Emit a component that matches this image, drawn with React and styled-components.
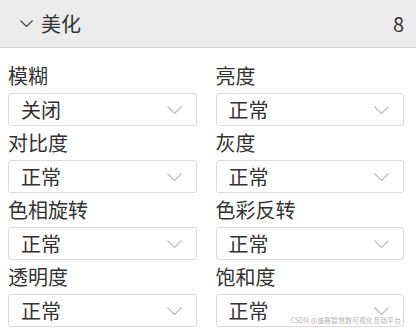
import React from "react";
import styled, { createGlobalStyle } from "styled-components";

const GlobalStyle = createGlobalStyle`
  html, body {
    margin: 0;
    padding: 0;
    background: #ffffff;
  }
  body {
    font-family: "Noto Sans CJK SC", "Noto Sans", sans-serif;
    color: #333333;
  }
`;

const Panel = styled.div`
  position: relative;
  width: 416px;
  height: 335px;
  overflow: hidden;
  background: #ffffff;
`;

const Header = styled.div`
  display: flex;
  align-items: center;
  height: 47px;
  padding: 0 12px 0 20px;
  background: #ececec;
  border-bottom: 1px solid #d9d9d9;
  box-sizing: border-box;
  height: 48px;
`;

const HeaderTitle = styled.div`
  display: flex;
  align-items: center;
  gap: 8px;
  flex: 1;
  font-size: 20px;
  line-height: 28px;
  color: #333333;
`;

const Count = styled.span`
  font-size: 20px;
  line-height: 28px;
  color: #333333;
`;

const Grid = styled.div`
  display: grid;
  grid-template-columns: 1fr 1fr;
  column-gap: 19px;
  padding: 11px 12px 0 8px;
`;

const Field = styled.div`
  display: flex;
  flex-direction: column;
`;

const Label = styled.div`
  font-size: 20px;
  line-height: 34px;
  height: 34px;
  color: #333333;
  white-space: nowrap;
`;

const Select = styled.div`
  display: flex;
  align-items: center;
  justify-content: space-between;
  height: 33px;
  box-sizing: border-box;
  padding: 0 14px 0 12px;
  border: 1px solid #dcdcdc;
  border-radius: 3px;
  font-size: 20px;
  color: #333333;
`;

const Watermark = styled.div`
  position: absolute;
  right: 15px;
  bottom: 11px;
  font-size: 7px;
  line-height: 8px;
  color: #b5b5b5;
  white-space: nowrap;
`;

const Chevron = ({ size = 15, color = "#bdbdbd", stroke = 1.2 }) => (
  <svg width={size} height={Math.round(size * 0.55)} viewBox="0 0 15 8" fill="none">
    <path d="M0.5 0.5 L7.5 7.5 L14.5 0.5" stroke={color} strokeWidth={stroke} />
  </svg>
);

const fields = [
  ["模糊", "关闭"],
  ["亮度", "正常"],
  ["对比度", "正常"],
  ["灰度", "正常"],
  ["色相旋转", "正常"],
  ["色彩反转", "正常"],
  ["透明度", "正常"],
  ["饱和度", "正常"],
];

export default function App() {
  return (
    <>
      <GlobalStyle />
      <Panel>
        <Header>
          <HeaderTitle>
            <Chevron size={13} color="#444" stroke={1.4} />
            <span>美化</span>
          </HeaderTitle>
          <Count>8</Count>
        </Header>
        <Grid>
          {fields.map(([label, value]) => (
            <Field key={label}>
              <Label>{label}</Label>
              <Select>
                <span>{value}</span>
                <Chevron />
              </Select>
            </Field>
          ))}
        </Grid>
        <Watermark>CSDN @迪赛智慧数可视化互动平台</Watermark>
      </Panel>
    </>
  );
}
